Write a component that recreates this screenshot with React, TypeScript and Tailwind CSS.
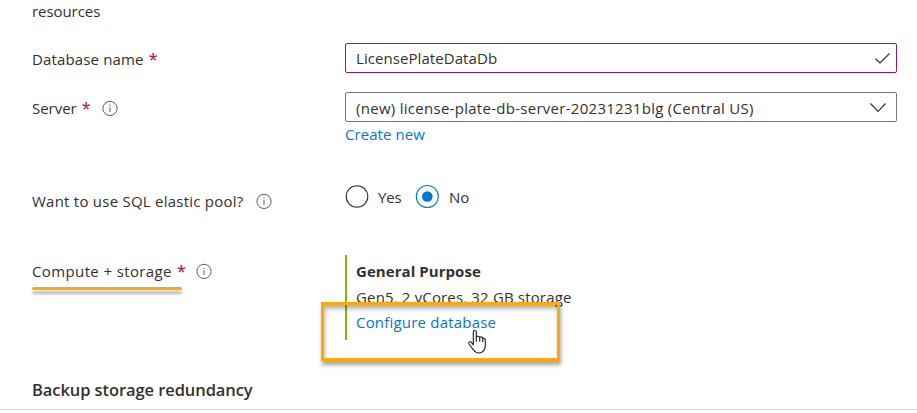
import type { ReactNode } from "react";

function Info() {
  return (
    <svg width="16" height="16" viewBox="0 0 16 16" className="shrink-0 overflow-visible" fill="none" stroke="#605e5c">
      <circle cx="8" cy="8.4" r="7.1" strokeWidth="1" />
      <path d="M8 7V12" strokeWidth="1" />
      <path d="M8 4.7V6" strokeWidth="1" />
    </svg>
  );
}

function Star() {
  return <span className="-mt-px w-[9px] text-[16px] leading-5 text-[#a4262c] [-webkit-text-stroke:0.2px_#a4262c]">*</span>;
}

function Label({ children }: { children: ReactNode }) {
  return <div className="flex h-5 w-[313px] shrink-0 items-center whitespace-nowrap">{children}</div>;
}

export default function App() {
  return (
    <div className="relative h-[413px] w-[917px] overflow-hidden bg-white pl-8 font-['Open_Sans','Noto_Sans',sans-serif] text-[15px] leading-5 text-[#323130]">
      <div className="h-[43px] pt-px">
        <span className="tracking-[-0.06px]">resources</span>
      </div>

      <div className="flex h-[49px] items-start">
        <div className="pt-1.5">
          <Label>
            <span className="mr-[5px] tracking-[0.15px]">Database name</span>
            <Star />
          </Label>
        </div>
        <div className="flex h-[30px] w-[552px] items-center justify-between rounded-[2px] border border-[#881798] pl-2.5 pr-[5px]">
          <span className="tracking-[0.07px]">LicensePlateDataDb</span>
          <svg width="17" height="14" viewBox="0 0 17 14" fill="none" stroke="#323130" strokeWidth="1.2">
            <path d="M1.5 7.7L6 12L15.5 2.5" />
          </svg>
        </div>
      </div>

      <div className="flex h-[94px] items-start">
        <div className="pt-1.5">
          <Label>
            <span className="mr-[5px] tracking-[-0.02px]">Server</span>
            <Star />
            <span className="ml-[11px] flex"><Info /></span>
          </Label>
        </div>
        <div className="flex flex-col">
          <div className="flex h-[30px] w-[552px] items-center justify-between rounded-[2px] border border-[#7a7877] pl-2.5 pr-[9px]">
            <span className="pt-0.5 tracking-[0.28px]">(new) license-plate-db-server-20231231blg (Central US)</span>
            <svg width="18" height="12" viewBox="0 0 18 12" fill="none" stroke="#323130" strokeWidth="1.2">
              <path d="M1.5 2.5L9 10.3L16.5 2.5" />
            </svg>
          </div>
          <a className="mt-0.5 tracking-[0.07px] text-[#0078d4]">Create new</a>
        </div>
      </div>

      <div className="flex h-[69px] items-start">
        <div className="pt-[5px]">
          <Label>
            <span className="mr-3 tracking-[0.24px]">Want to use SQL elastic pool?</span>
            <Info />
          </Label>
        </div>
        <div className="flex h-[22px] items-center">
          <svg width="24" height="22" viewBox="0 0 24 22" fill="none" className="overflow-visible">
            <circle cx="12" cy="10.5" r="10.8" stroke="#323130" strokeWidth="1.1" />
          </svg>
          <span className="ml-[9px] w-[37px] tracking-[-0.2px]">Yes</span>
          <svg width="24" height="22" viewBox="0 0 24 22" fill="none" className="overflow-visible">
            <circle cx="12.3" cy="10.5" r="11" stroke="#0078d4" strokeWidth="1.1" />
            <circle cx="12.3" cy="10.5" r="5.3" fill="#0078d4" />
          </svg>
          <span className="ml-[10px]">No</span>
        </div>
      </div>

      <div className="flex h-[125px] items-start">
        <div className="flex w-[313px] flex-col pt-1.5">
          <Label>
            <span className="mr-[5px] tracking-[0.38px]">Compute + storage</span>
            <Star />
            <span className="ml-[10px] flex"><Info /></span>
          </Label>
          <div className="mt-1.5 h-[3px] w-[150px] rounded-sm bg-[#fbab09] shadow-[0_4px_3px_rgba(0,0,0,0.3)]" />
        </div>
        <div className="flex h-[85px] flex-col border-l-2 border-[#7fba00] pl-[9px] pt-1.5">
          <span className="h-[26px] font-bold tracking-[0.06px]">General Purpose</span>
          <span className="h-[25px] tracking-[0.16px]">Gen5, 2 vCores, 32 GB storage</span>
          <a className="tracking-[0.2px] text-[#0078d4]">Configure database</a>
        </div>
      </div>

      <h2 className="text-[16.5px] font-semibold tracking-[-0.08px]">Backup storage redundancy</h2>
      <div className="absolute left-0 top-[409px] h-px w-full bg-[#d8d8d8]" />

      <div className="absolute left-[321px] top-[302px] h-[59px] w-[239px] border-[3px] border-[#fbab09] shadow-[1px_4px_4px_rgba(0,0,0,0.35),inset_1px_4px_4px_rgba(0,0,0,0.3)]" />
      <svg className="absolute left-[467px] top-[329px]" width="20" height="26" viewBox="0 0 20 26" fill="white" stroke="#19172a" strokeWidth="1.1" strokeLinejoin="round" strokeLinecap="round">
        <path d="M6.3 15.8V3C6.3 1 9.3 1 9.3 3V7.8C10 6.9 12.2 6.9 12.7 8.4C13.6 7.6 15.5 7.8 15.8 9.3C16.8 8.9 18.3 9.4 18.3 11V17C18.3 20.5 15.5 24 12 24C9.2 24 7.6 22.8 6.4 20.8L2 15C1 13.3 3 11.9 4.5 13.5Z" />
        <path d="M9.3 7.8V12.3M12.7 8.4V12.3M15.8 9.3V12.8" fill="none" />
      </svg>
    </div>
  );
}
